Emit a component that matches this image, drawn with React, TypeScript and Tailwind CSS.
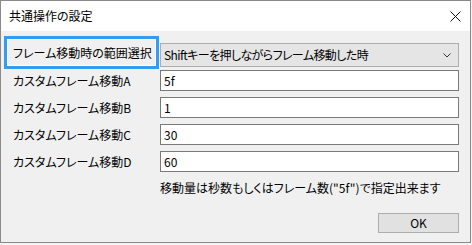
import React from 'react'

const font = { fontFamily: '"Noto Sans CJK JP", "Noto Sans", sans-serif' }

function Row(props: { label: string; value: string }) {
  return (
    <div className='flex h-[21px] items-center'>
      <div className='w-[159px] pl-[12px] text-[12px] leading-[21px] [font-feature-settings:"palt"]'>{props.label}</div>
      <input
        defaultValue={props.value}
        className='h-[21px] w-[299px] border border-[#7a7a7a] bg-white px-[3px] text-[12px] text-black outline-none'
        style={font}
      />
    </div>
  )
}

export default function App(): React.ReactNode {
  return (
    <div className='h-[245px] w-[472px] bg-[#f4f4f4]' style={font}>
      <div className='flex h-[243px] w-[471px] flex-col border border-[#8a8a8a] text-black'>
        {/* title bar */}
        <div className='flex h-[30px] shrink-0 items-center justify-between bg-white pl-[8px] pr-[9px]'>
          <span className='text-[12px] [font-feature-settings:"palt"]'>共通操作の設定</span>
          <svg width='11' height='11' viewBox='0 0 11 11' className='mt-[1px]'>
            <path d='M0.5 0.5 L10.5 10.5 M10.5 0.5 L0.5 10.5' stroke='#111' strokeWidth='1' fill='none' />
          </svg>
        </div>

        <div className='flex flex-1 flex-col bg-[#f0f0f0]'>
          {/* range select row */}
          <div className='mt-[5px] flex h-[33px] items-start pl-[3px]'>
            <div className='h-[33px] w-[155px] border-[3px] border-[#339cf0]'>
              <div className='flex h-full items-center border border-white pl-[5px] text-[12px] [font-feature-settings:"palt"]'>
                フレーム移動時の範囲選択
              </div>
            </div>
            <div className='ml-[1px] mt-[7px] flex h-[24px] w-[299px] items-center justify-between border border-[#adadad] bg-[#e5e5e5] pl-[3px] pr-[7px] text-[12px] [font-feature-settings:"palt"]'>
              <span className='tracking-[-0.6px]'>Shiftキーを押しながらフレーム移動した時</span>
              <svg width='8' height='5' viewBox='0 0 8 5'>
                <path d='M0.5 0.5 L4 4 L7.5 0.5' stroke='#333' strokeWidth='1' fill='none' />
              </svg>
            </div>
          </div>

          <div className='mt-[1px] flex flex-col gap-[6px]'>
            <Row label='カスタムフレーム移動A' value='5f' />
            <Row label='カスタムフレーム移動B' value='1' />
            <Row label='カスタムフレーム移動C' value='30' />
            <Row label='カスタムフレーム移動D' value='60' />
          </div>

          <div className='mt-[8px] h-[16px] pl-[159px] text-[12px] leading-[16px] [font-feature-settings:"palt"]'>
            移動量は秒数もしくはフレーム数("5f")で指定出来ます
          </div>

          <div className='mt-[17px] flex justify-end pr-[11px]'>
            <button className='h-[20px] w-[81px] border border-[#adadad] bg-[#e1e1e1] text-[12px] leading-[18px]'>
              OK
            </button>
          </div>
        </div>
      </div>
    </div>
  )
}
